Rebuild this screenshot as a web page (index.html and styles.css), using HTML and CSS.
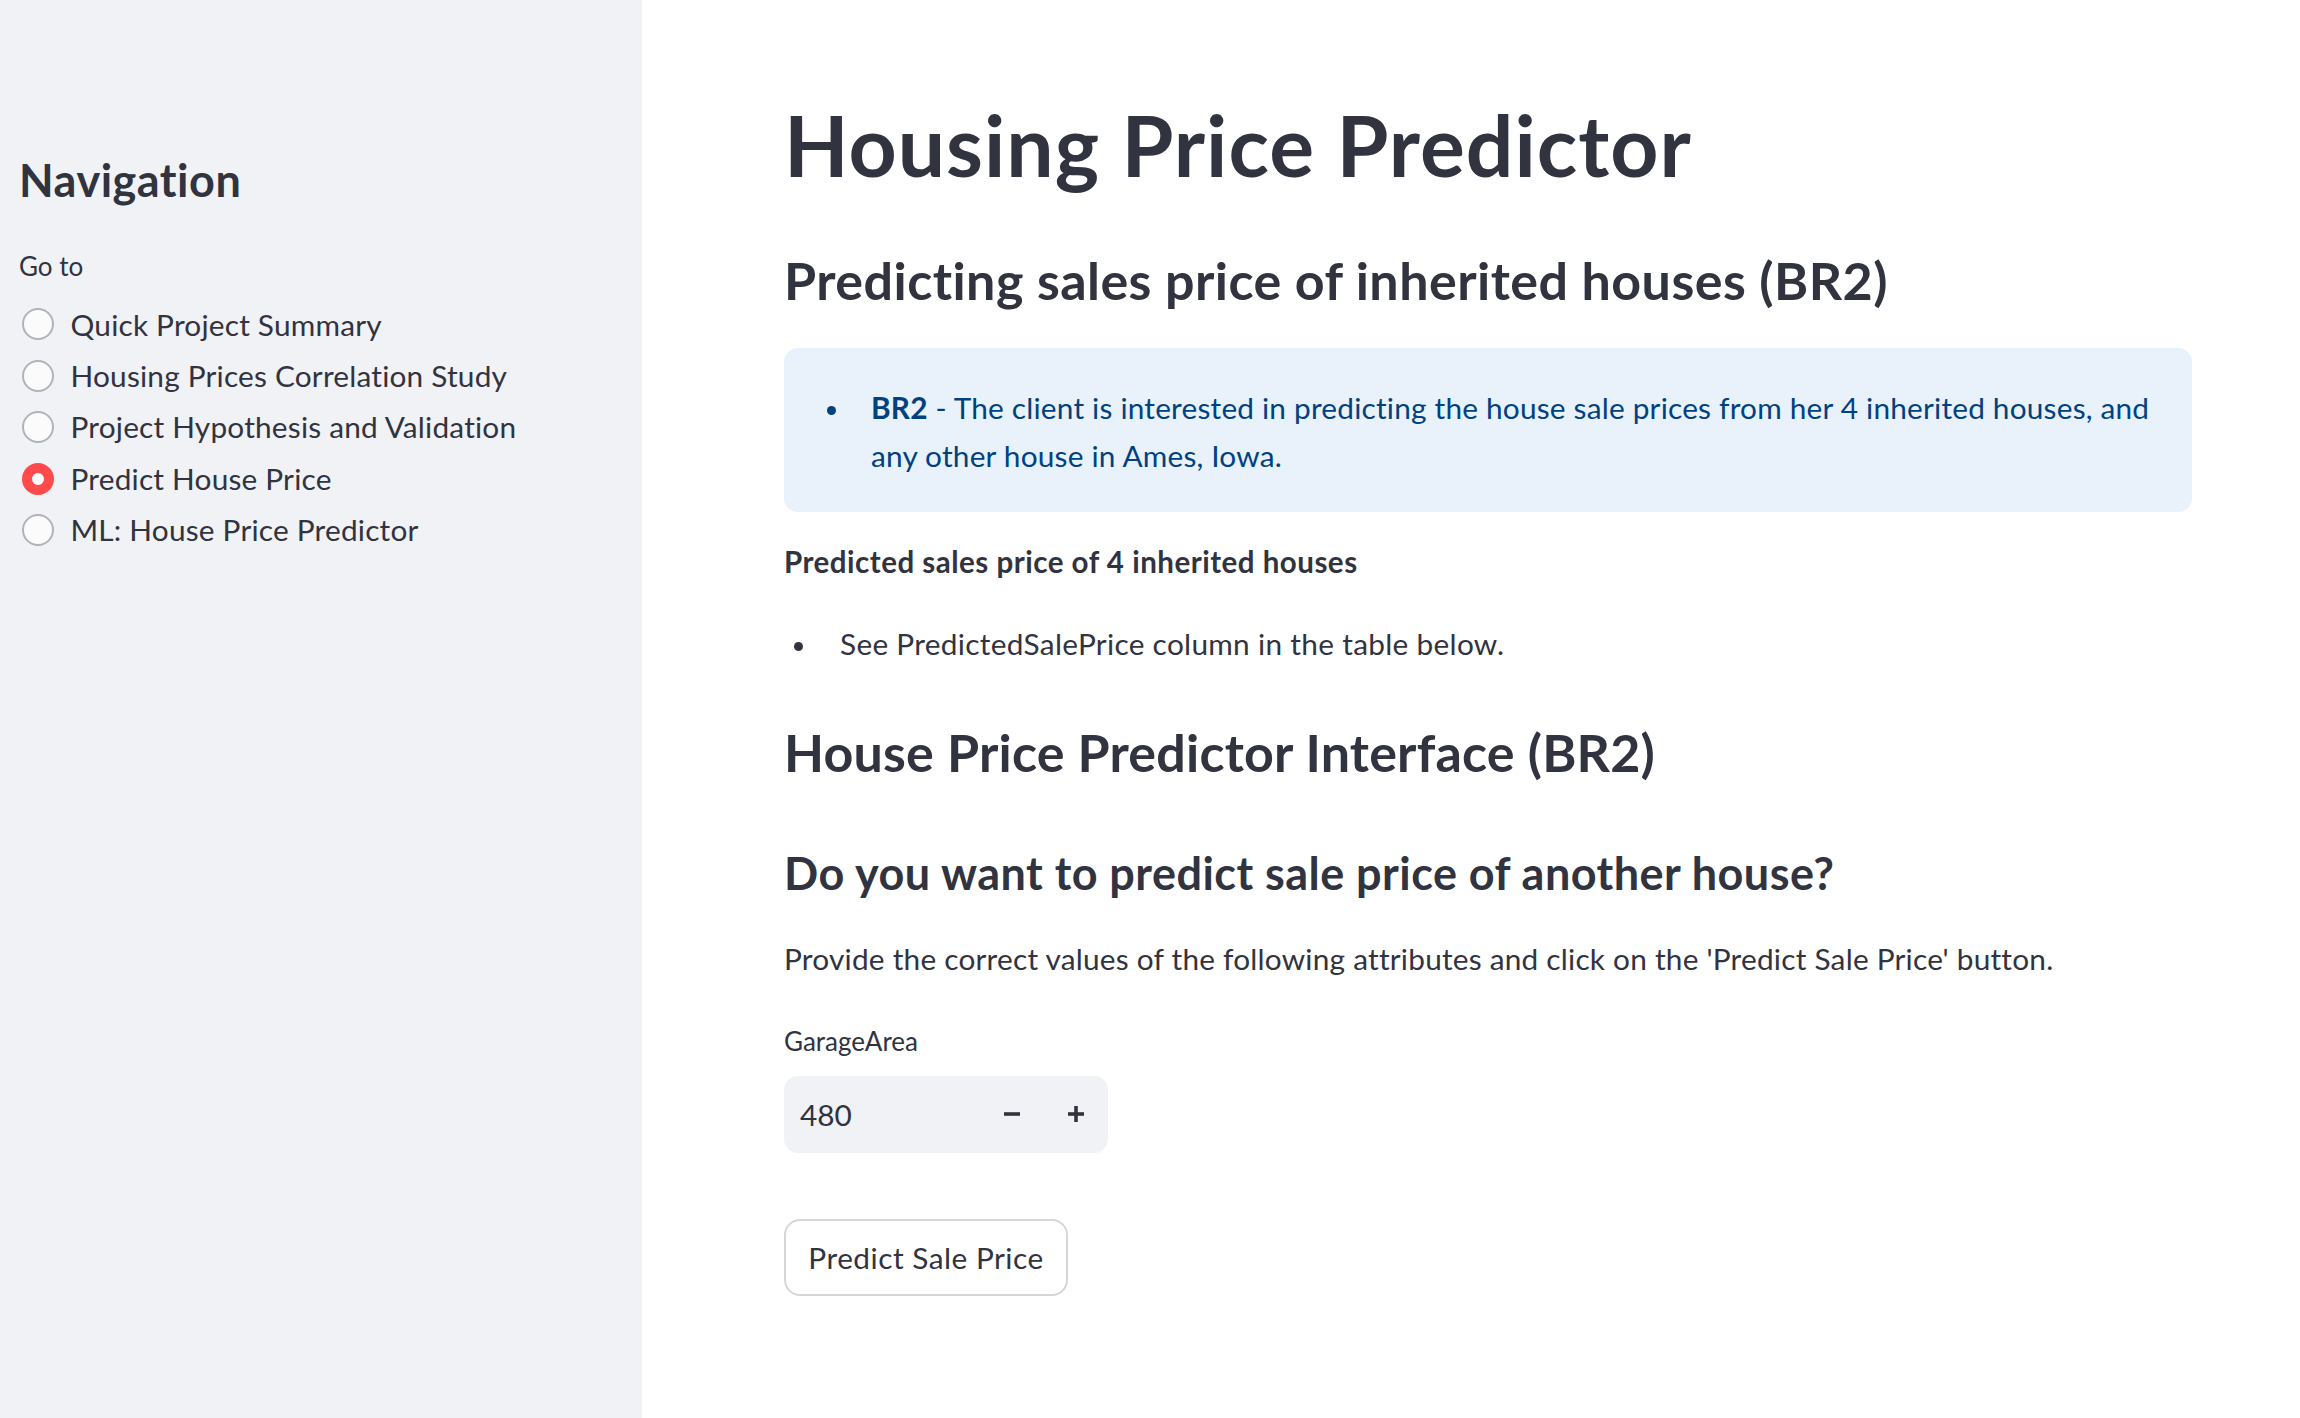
FILE: index.html
```html
<!DOCTYPE html>
<html lang="en">
<head>
<meta charset="utf-8">
<title>Housing Price Predictor</title>
<link rel="stylesheet" href="styles.css">
</head>
<body>
<div class="app">
  <aside class="sidebar">
    <h1 class="nav-title">Navigation</h1>
    <div class="radio-label">Go to</div>
    <div class="radio-group">
      <div class="radio"><span class="dot"></span><span class="radio-text">Quick Project Summary</span></div>
      <div class="radio"><span class="dot"></span><span class="radio-text">Housing Prices Correlation Study</span></div>
      <div class="radio"><span class="dot"></span><span class="radio-text">Project Hypothesis and Validation</span></div>
      <div class="radio selected"><span class="dot"></span><span class="radio-text">Predict House Price</span></div>
      <div class="radio"><span class="dot"></span><span class="radio-text">ML: House Price Predictor</span></div>
    </div>
  </aside>
  <main class="main">
    <div class="block">
      <h1 class="title">Housing Price Predictor</h1>
      <h3 class="sub sub-first">Predicting sales price of inherited houses (BR2)</h3>
      <div class="info">
        <ul class="list">
          <li class="item"><span class="bullet"></span><p class="item-text"><b class="strong">BR2</b><span class="rest"> - The client is interested in predicting the house sale prices from her 4 inherited houses, and</span><br><span class="rest">any other house in Ames, Iowa.</span></p></li>
        </ul>
      </div>
      <p class="bold-p">Predicted sales price of 4 inherited houses</p>
      <ul class="list plain-list">
        <li class="item"><span class="bullet"></span><p class="item-text">See PredictedSalePrice column in the table below.</p></li>
      </ul>
      <h3 class="sub sub-second">House Price Predictor Interface (BR2)</h3>
      <h4 class="h4">Do you want to predict sale price of another house?</h4>
      <p class="text">Provide the correct values of the following attributes and click on the 'Predict Sale Price' button.</p>
      <div class="field-label">GarageArea</div>
      <div class="num-input">
        <span class="num-value">480</span>
        <span class="step"><svg width="18" height="18" viewBox="0 0 18 18"><line x1="1" y1="9" x2="17" y2="9" stroke="#31333f" stroke-width="3.6"/></svg></span>
        <span class="step"><svg width="18" height="18" viewBox="0 0 18 18"><line x1="1" y1="9" x2="17" y2="9" stroke="#31333f" stroke-width="3.6"/><line x1="9" y1="1" x2="9" y2="17" stroke="#31333f" stroke-width="3.6"/></svg></span>
      </div>
      <button class="btn">Predict Sale Price</button>
    </div>
  </main>
</div>
</body>
</html>
```

FILE: styles.css
```css
html, body {
  margin: 0;
  padding: 0;
  background: #ffffff;
}

body {
  font-family: Lato, "Noto Sans", "DejaVu Sans", sans-serif;
  color: #31333f;
  overflow: hidden;
}

.app {
  display: flex;
  width: 2300px;
  height: 1418px;
}

/* ---------- Sidebar ---------- */
.sidebar {
  width: 642px;
  flex: 0 0 642px;
  background: #f0f2f6;
  box-sizing: border-box;
  padding: 0 0 0 19px;
}

.nav-title {
  margin: 153px 0 0 0;
  font-size: 45px;
  font-weight: 700;
  line-height: 1.2;
  letter-spacing: 0.5px;
  color: #31333f;
}

.radio-label {
  margin-top: 44px;
  font-size: 26px;
  line-height: 1.2;
}

.radio-group {
  margin-top: 16.5px;
  display: flex;
  flex-direction: column;
}

.radio {
  display: flex;
  align-items: center;
  height: 51.4px;
}

.dot {
  width: 32px;
  height: 32px;
  box-sizing: border-box;
  border-radius: 50%;
  border: 2px solid #b1b3ba;
  background: #fbfbfc;
  margin-left: 3px;
  margin-right: 16.5px;
  display: flex;
  align-items: center;
  justify-content: center;
}

.radio.selected .dot {
  background: #ff4b4b;
  border-color: #ff4b4b;
}

.radio.selected .dot::after {
  content: "";
  width: 12px;
  height: 12px;
  border-radius: 50%;
  background: #ffffff;
}

.radio-text {
  font-size: 29.8px;
  line-height: 1.6;
  letter-spacing: 0.2px;
}

/* ---------- Main ---------- */
.main {
  flex: 1;
  padding-left: 142px;
}

.block {
  width: 1408px;
  display: flex;
  flex-direction: column;
  align-items: flex-start;
}

.title {
  margin: 95px 0 0 0;
  font-size: 84px;
  font-weight: 700;
  line-height: 1.2;
  letter-spacing: 1px;
}

.sub {
  margin: 0;
  font-size: 52px;
  font-weight: 700;
  line-height: 1.2;
  letter-spacing: 0.45px;
}

.sub-first {
  margin-top: 53px;
}

.sub-second {
  margin-top: 53px;
  letter-spacing: 0.2px;
}

.info {
  align-self: stretch;
  margin-top: 37px;
  background: #e9f1fb;
  border-radius: 14px;
  padding: 35.6px 32px 32.4px 32px;
  color: #004280;
}

.list {
  margin: 0;
  padding: 0;
  list-style: none;
  font-size: 29.8px;
  line-height: 48px;
  letter-spacing: 0.2px;
}

.item {
  display: flex;
  align-items: flex-start;
}

.item-text {
  margin: 0;
}

.bullet {
  flex: 0 0 auto;
  width: 9px;
  height: 9px;
  border-radius: 50%;
  background: currentColor;
  margin: 22px 0 0 11px;
}

.info .bullet {
  margin-left: 11px;
  margin-right: 35px;
}

.plain-list {
  margin-top: 34px;
  letter-spacing: 0.3px;
}

.plain-list .bullet {
  margin-left: 10px;
  margin-right: 37px;
}

.strong {
  font-weight: 700;
}

.bold-p {
  margin: 26px 0 0 0;
  font-size: 29.5px;
  font-weight: 700;
  line-height: 48px;
  letter-spacing: 0.5px;
}

.h4 {
  margin: 62px 0 0 0;
  font-size: 45px;
  font-weight: 700;
  line-height: 1.2;
  letter-spacing: 0.45px;
}

.text {
  margin: 35.8px 0 0 0;
  font-size: 29.8px;
  line-height: 48px;
  letter-spacing: 0.22px;
}

.field-label {
  margin-top: 43px;
  font-size: 26px;
  line-height: 1.2;
}

.num-input {
  margin-top: 18px;
  width: 324px;
  height: 77px;
  box-sizing: border-box;
  background: #f0f2f6;
  border-radius: 14px;
  display: flex;
  align-items: center;
  padding-left: 16px;
}

.num-value {
  flex: 1;
  font-size: 29.8px;
}

.step {
  width: 64px;
  height: 77px;
  display: flex;
  align-items: center;
  justify-content: center;
}

.btn {
  margin-top: 66px;
  height: 77px;
  width: 284px;
  box-sizing: border-box;
  background: #ffffff;
  border: 2px solid #d6d6d9;
  border-radius: 16px;
  font-family: Lato, "Noto Sans", sans-serif;
  font-size: 29.8px;
  letter-spacing: 0.5px;
  color: #31333f;
  padding: 0 20px;
  cursor: pointer;
}
```
